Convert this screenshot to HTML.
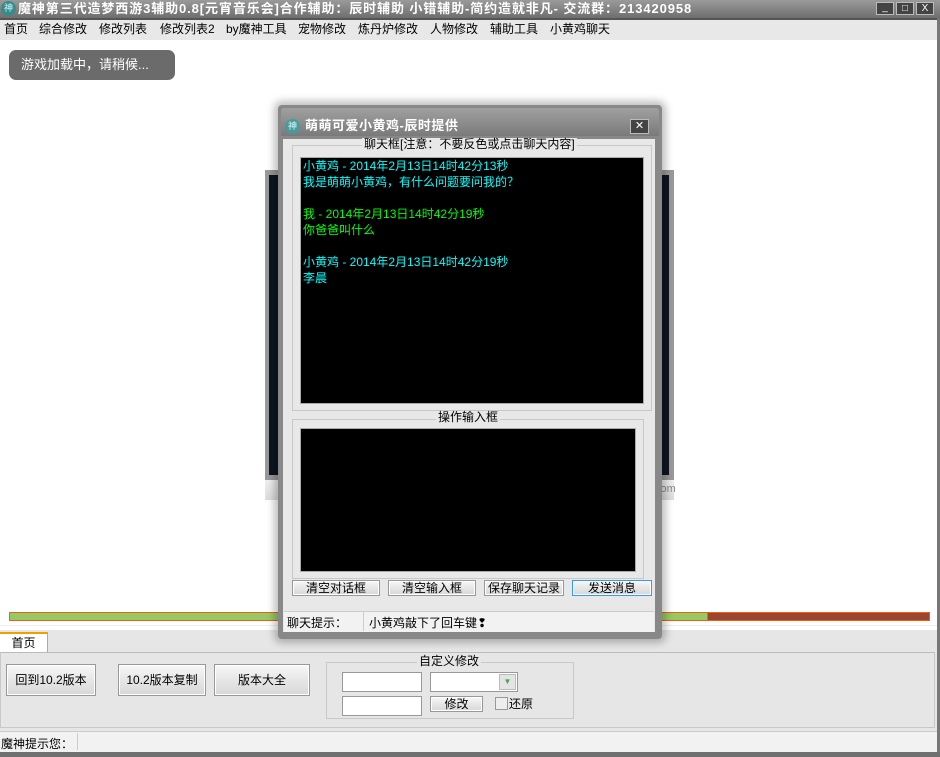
<!DOCTYPE html>
<html><head><meta charset="utf-8"><style>
*{margin:0;padding:0;box-sizing:border-box}
body{width:940px;height:757px;position:relative;overflow:hidden;background:#fff;font-family:"Liberation Sans","Noto Sans CJK SC","WenQuanYi Zen Hei",sans-serif;font-size:12px;color:#000}
.a{position:absolute}
.m{position:absolute;top:21px;line-height:16px;white-space:nowrap}
.btn{position:absolute;background:linear-gradient(#f8f8f8,#e6e6e6 50%,#d8d8d8);border:1px solid #999;box-shadow:inset 0 0 0 1px #fff;text-align:center;font-size:12px}
.gb{position:absolute;border:1px solid #c8c8c8}
.lbl{position:absolute;background:#e8e8e8;padding:0 2px;font-size:12px;line-height:13px}
</style></head><body>
<div class="a" style="left:0;top:0;width:940px;height:18px;background:linear-gradient(#9a9a9a,#6e6e6e);"></div>
<div class="a" style="left:1px;top:1px;width:15px;height:15px;border-radius:50%;background:#3a8a8a;color:#cff;font-size:9px;line-height:15px;text-align:center">神</div>
<div class="a" style="left:18px;top:0;height:18px;line-height:17px;color:#fff;font-weight:bold;font-size:13px;white-space:nowrap;letter-spacing:0.9px">魔神第三代造梦西游3辅助0.8[元宵音乐会]合作辅助：辰时辅助 小错辅助-简约造就非凡- 交流群：213420958</div>
<div class="a" style="left:876px;top:2px;width:18px;height:13px;background:#444;border:1px solid #bbb;color:#fff;font-size:10px;line-height:10px;text-align:center">_</div>
<div class="a" style="left:896px;top:2px;width:18px;height:13px;background:#444;border:1px solid #bbb;color:#fff;font-size:10px;line-height:11px;text-align:center">□</div>
<div class="a" style="left:916px;top:2px;width:18px;height:13px;background:#444;border:1px solid #bbb;color:#fff;font-size:10px;line-height:11px;text-align:center">X</div>
<div class="a" style="left:0;top:18px;width:937px;height:22px;background:#e8e8e8;border-top:2px solid #555"></div>
<div class="m" style="left:4px">首页</div>
<div class="m" style="left:39px">综合修改</div>
<div class="m" style="left:99px">修改列表</div>
<div class="m" style="left:160px">修改列表2</div>
<div class="m" style="left:226px">by魔神工具</div>
<div class="m" style="left:298px">宠物修改</div>
<div class="m" style="left:358px">炼丹炉修改</div>
<div class="m" style="left:430px">人物修改</div>
<div class="m" style="left:490px">辅助工具</div>
<div class="m" style="left:550px">小黄鸡聊天</div>
<div class="a" style="left:937px;top:18px;width:3px;height:739px;background:#777"></div>
<div class="a" style="left:9px;top:50px;width:166px;height:30px;border-radius:7px;background:#6b6b6b;color:#fff;font-size:13px;line-height:30px;padding-left:12px">游戏加载中，请稍候...</div>
<div class="a" style="left:265px;top:170px;width:409px;height:310px;background:#9a9a9a"></div>
<div class="a" style="left:269px;top:175px;width:400px;height:300px;background:#0d1520"></div>
<div class="a" style="left:265px;top:480px;width:409px;height:20px;background:linear-gradient(#f0f0f0,#dcdcdc)"></div>
<div class="a" style="left:655px;top:483px;color:#888;font-size:11px">com</div>
<div class="a" style="left:9px;top:612px;width:921px;height:9px;border:1px solid #f06010;background:linear-gradient(90deg,#96c864 0 75.9%,#9b4630 75.9%)"></div>
<div class="a" style="left:0;top:625px;width:937px;height:1px;background:#eee"></div>
<div class="a" style="left:0;top:630px;width:937px;height:102px;background:#e6e6e6"></div>
<div class="a" style="left:0;top:632px;width:48px;height:21px;background:#fff;border-top:2px solid #f0a000;border-right:1px solid #aaa;text-align:center;line-height:18px">首页</div>
<div class="a" style="left:0;top:652px;width:935px;height:76px;border:1px solid #c8c8c8;border-top:1px solid #bbb"></div>
<div class="btn" style="left:6px;top:664px;width:90px;height:32px;line-height:30px">回到10.2版本</div>
<div class="btn" style="left:118px;top:664px;width:88px;height:32px;line-height:30px">10.2版本复制</div>
<div class="btn" style="left:214px;top:664px;width:96px;height:32px;line-height:30px">版本大全</div>
<div class="gb" style="left:326px;top:662px;width:248px;height:57px"></div>
<div class="lbl" style="left:417px;top:655px;background:#e6e6e6">自定义修改</div>
<div class="a" style="left:342px;top:672px;width:80px;height:20px;background:#fff;border:1px solid #999"></div>
<div class="a" style="left:430px;top:672px;width:88px;height:20px;background:#fff;border:1px solid #999"></div>
<div class="a" style="left:499px;top:674px;width:17px;height:16px;background:#e4e4e4;border:1px solid #bbb;color:#4a4;font-size:8px;text-align:center;line-height:14px">▼</div>
<div class="a" style="left:342px;top:696px;width:80px;height:20px;background:#fff;border:1px solid #999"></div>
<div class="btn" style="left:430px;top:696px;width:53px;height:16px;line-height:14px">修改</div>
<div class="a" style="left:495px;top:697px;width:13px;height:13px;background:#eee;border:1px solid #999"></div>
<div class="a" style="left:509px;top:695px">还原</div>
<div class="a" style="left:0;top:731px;width:937px;height:21px;background:#f2f2f2;border-top:1px solid #ccc"></div>
<div class="a" style="left:1px;top:735px">魔神提示您：</div>
<div class="a" style="left:77px;top:733px;width:1px;height:17px;background:#ccc"></div>
<div class="a" style="left:0;top:752px;width:940px;height:5px;background:#707070"></div>
<div class="a" style="left:278px;top:105px;width:384px;height:534px;background:#888;box-shadow:0 0 8px 4px rgba(0,0,0,.25);border-radius:4px"></div>
<div class="a" style="left:281px;top:108px;width:378px;height:28px;background:linear-gradient(#a0a0a0,#7a7a7a);border-radius:3px 3px 0 0"></div>
<div class="a" style="left:285px;top:119px;width:15px;height:15px;border-radius:50%;background:#4a9a9a;color:#dff;font-size:9px;line-height:15px;text-align:center">神</div>
<div class="a" style="left:305px;top:117px;color:#fff;font-weight:bold;font-size:13px;line-height:17px;letter-spacing:0.5px">萌萌可爱小黄鸡-辰时提供</div>
<div class="a" style="left:630px;top:119px;width:19px;height:15px;background:#444;border:1px solid #bbb;color:#fff;font-size:11px;line-height:12px;text-align:center">✕</div>
<div class="a" style="left:283px;top:139px;width:372px;height:493px;background:#e8e8e8"></div>
<div class="gb" style="left:292px;top:145px;width:360px;height:266px"></div>
<div class="lbl" style="left:362px;top:138px">聊天框[注意：不要反色或点击聊天内容]</div>
<div class="a" style="left:300px;top:157px;width:344px;height:247px;background:#000;border:1px solid #aaa"></div>
<div class="a" style="left:303px;top:158px;font-size:12px;line-height:16px;white-space:pre;color:#0ff"><span>小黄鸡 - 2014年2月13日14时42分13秒</span>
<span>我是萌萌小黄鸡，有什么问题要问我的？</span>

<span style="color:#0f0">我 - 2014年2月13日14时42分19秒</span>
<span style="color:#0f0">你爸爸叫什么</span>

<span>小黄鸡 - 2014年2月13日14时42分19秒</span>
<span>李晨</span></div>
<div class="gb" style="left:292px;top:419px;width:352px;height:160px"></div>
<div class="lbl" style="left:436px;top:411px">操作输入框</div>
<div class="a" style="left:300px;top:428px;width:336px;height:144px;background:#000;border:1px solid #aaa"></div>
<div class="btn" style="left:292px;top:580px;width:88px;height:16px;line-height:14px">清空对话框</div>
<div class="btn" style="left:388px;top:580px;width:88px;height:16px;line-height:14px">清空输入框</div>
<div class="btn" style="left:484px;top:580px;width:80px;height:16px;line-height:14px">保存聊天记录</div>
<div class="btn" style="left:572px;top:580px;width:80px;height:16px;line-height:14px;border-color:#39f">发送消息</div>
<div class="a" style="left:284px;top:611px;width:370px;height:21px;background:#f2f2f2;border-top:1px solid #ccc"></div>
<div class="a" style="left:287px;top:614px">聊天提示：</div>
<div class="a" style="left:363px;top:612px;width:1px;height:19px;background:#ccc"></div>
<div class="a" style="left:369px;top:614px">小黄鸡敲下了回车键❢</div>
</body></html>
